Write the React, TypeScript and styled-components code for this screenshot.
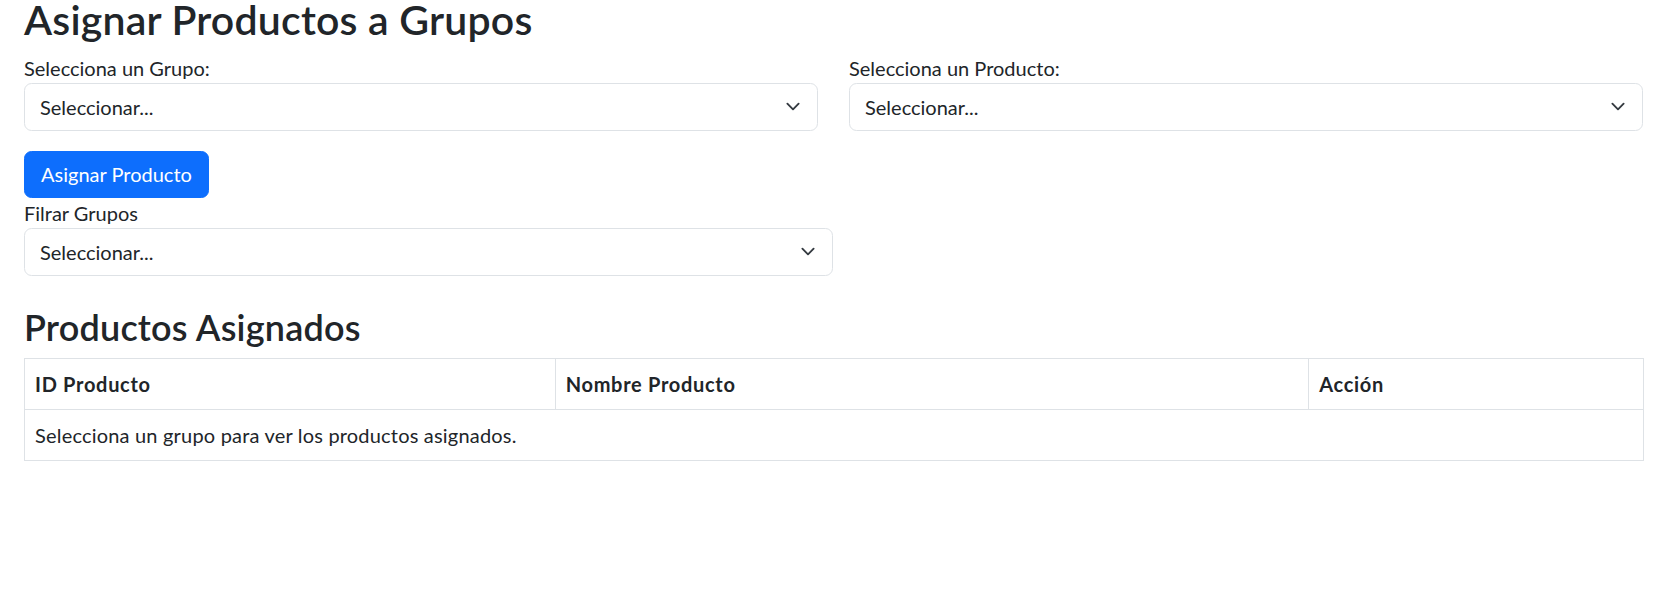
import React from "react";
import styled, { createGlobalStyle } from "styled-components";

const Global = createGlobalStyle`
  html, body { margin: 0; padding: 0; background: #fff; }
  body {
    font-family: Lato, "Noto Sans", "Liberation Sans", sans-serif;
    font-size: 20px;
    line-height: 30px;
    color: #212529;
  }
  * { box-sizing: border-box; }
`;

const Page = styled.div`
  width: 1644px;
  padding-left: 24px;
`;

const Title = styled.h2`
  margin: 0 0 13px;
  font-size: 41px;
  line-height: 40px;
  font-weight: 600;
  letter-spacing: 0.2px;
`;

const SubTitle = styled.h3`
  margin: 30px 0 10px;
  font-size: 36px;
  line-height: 42px;
  font-weight: 600;
  letter-spacing: 0.2px;
`;

const Row = styled.div`
  display: grid;
  grid-template-columns: 794px 794px;
  column-gap: 31px;
`;

const Field = styled.div<{ $width?: number }>`
  display: flex;
  flex-direction: column;
  width: ${(p) => (p.$width ? `${p.$width}px` : "auto")};
`;

const Label = styled.label`
  display: block;
  font-size: 20px;
  line-height: 30px;
`;

const SelectWrap = styled.div`
  position: relative;
  width: 100%;
`;

const Select = styled.select`
  appearance: none;
  -webkit-appearance: none;
  display: block;
  width: 100%;
  height: 47.5px;
  padding: 7.5px 45px 7.5px 15px;
  font-family: inherit;
  font-size: 20px;
  line-height: 30px;
  color: #212529;
  background: #fff;
  border: 1.25px solid #dee2e6;
  border-radius: 7.5px;
  outline: none;
`;

const Chevron = styled.svg`
  position: absolute;
  right: 15px;
  top: 50%;
  width: 20px;
  height: 15px;
  margin-top: -7.5px;
  pointer-events: none;
`;

const Button = styled.button`
  align-self: flex-start;
  margin-top: 20px;
  height: 47.5px;
  padding: 7.5px 16px;
  font-family: inherit;
  font-size: 20px;
  line-height: 30px;
  color: #fff;
  background: #0d6efd;
  border: 1.25px solid #0d6efd;
  border-radius: 7.5px;
  cursor: pointer;
`;

const Table = styled.table`
  width: 1620px;
  border-collapse: collapse;
  border: 1.25px solid #dee2e6;
`;

const Th = styled.th<{ $w: number }>`
  width: ${(p) => p.$w}px;
  text-align: left;
  font-weight: 700;
  letter-spacing: 0.7px;
  padding: 10px;
  line-height: 30px;
  border: 1.25px solid #dee2e6;
`;

const Td = styled.td`
  padding: 10px;
  line-height: 30px;
  letter-spacing: 0.19px;
  border: 1.25px solid #dee2e6;
`;

const Stack = styled.div`
  display: flex;
  flex-direction: column;
`;

function Dropdown() {
  return (
    <SelectWrap>
      <Select defaultValue="">
        <option value="">Seleccionar...</option>
      </Select>
      <Chevron viewBox="0 0 16 16">
        <path
          d="m2 5 6 6 6-6"
          fill="none"
          stroke="#343a40"
          strokeWidth="2"
          strokeLinecap="round"
          strokeLinejoin="round"
        />
      </Chevron>
    </SelectWrap>
  );
}

export default function App() {
  return (
    <>
      <Global />
      <Page>
        <Title>Asignar Productos a Grupos</Title>
        <Row>
          <Field>
            <Label>Selecciona un Grupo:</Label>
            <Dropdown />
          </Field>
          <Field>
            <Label>Selecciona un Producto:</Label>
            <Dropdown />
          </Field>
        </Row>
        <Stack>
          <Button>Asignar Producto</Button>
          <Field $width={809}>
            <Label>Filrar Grupos</Label>
            <Dropdown />
          </Field>
        </Stack>
        <SubTitle>Productos Asignados</SubTitle>
        <Table>
          <thead>
            <tr>
              <Th $w={531}>ID Producto</Th>
              <Th $w={754}>Nombre Producto</Th>
              <Th $w={335}>Acción</Th>
            </tr>
          </thead>
          <tbody>
            <tr>
              <Td colSpan={3}>Selecciona un grupo para ver los productos asignados.</Td>
            </tr>
          </tbody>
        </Table>
      </Page>
    </>
  );
}
